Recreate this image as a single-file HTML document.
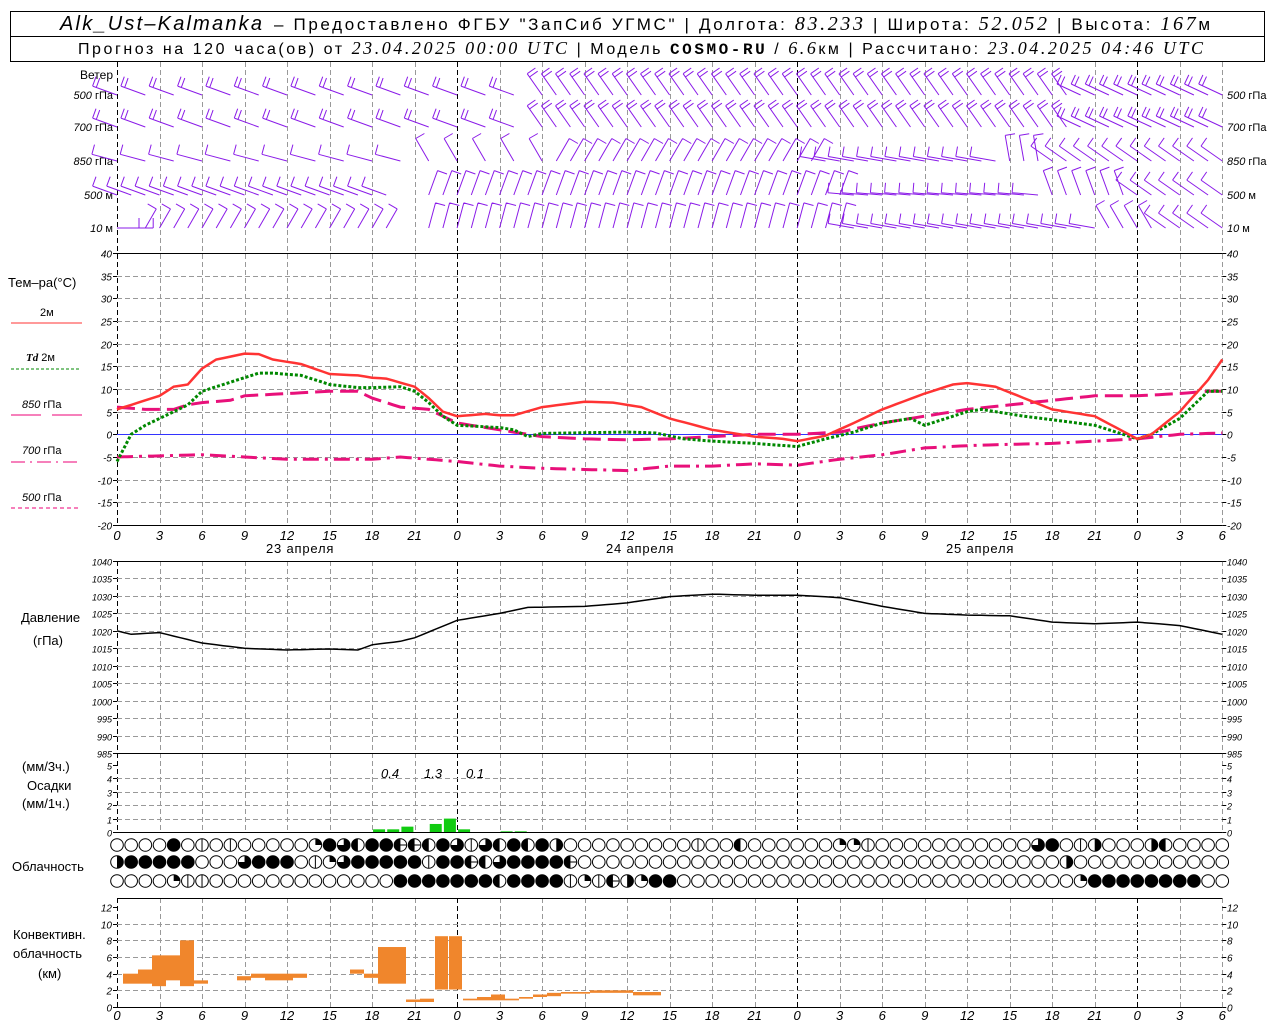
<!DOCTYPE html>
<html><head><meta charset="utf-8">
<style>
html,body{margin:0;padding:0;background:#fff;}
body{width:1280px;height:1024px;overflow:hidden;position:relative;font-family:"Liberation Sans",sans-serif;}
svg{position:absolute;left:0;top:0;}
text{font-family:"Liberation Sans",sans-serif;}
</style></head><body>
<svg id="s" width="1280" height="1024" xmlns="http://www.w3.org/2000/svg">
<rect x="10.5" y="11.5" width="1254" height="50" fill="none" stroke="#000"/>
<line x1="10" y1="36.5" x2="1265" y2="36.5" stroke="#000"/>
<text x="60" y="30" font-size="20" font-family="Liberation Serif" font-style="italic" textLength="202" lengthAdjust="spacing">Alk_Ust–Kalmanka</text>
<text x="274" y="30" font-size="17" textLength="936" lengthAdjust="spacing">–  Предоставлено ФГБУ "ЗапСиб УГМС" | Долгота: <tspan font-style="italic" font-family="Liberation Serif" font-size="20">83.233</tspan> | Широта: <tspan font-style="italic" font-family="Liberation Serif" font-size="20">52.052</tspan> | Высота: <tspan font-style="italic" font-family="Liberation Serif" font-size="20">167</tspan>м</text>
<text x="78" y="54" font-size="16" textLength="1125" lengthAdjust="spacing">Прогноз на 120 часа(ов) от <tspan font-style="italic" font-family="Liberation Serif" font-size="18">23.04.2025 00:00 UTC</tspan>  | Модель <tspan font-weight="bold" font-family="Liberation Mono">COSMO-RU</tspan> / <tspan font-style="italic" font-family="Liberation Serif" font-size="18">6.6</tspan>км | Рассчитано: <tspan font-style="italic" font-family="Liberation Serif" font-size="18">23.04.2025 04:46 UTC</tspan></text>

<g font-size="11">
<text x="113" y="79" text-anchor="end" font-size="12">Ветер</text>
<text x="113" y="99" text-anchor="end"><tspan font-style="italic">500</tspan> гПа</text>
<text x="113" y="131" text-anchor="end"><tspan font-style="italic">700</tspan> гПа</text>
<text x="113" y="165" text-anchor="end"><tspan font-style="italic">850</tspan> гПа</text>
<text x="113" y="199" text-anchor="end"><tspan font-style="italic">500</tspan>  м</text>
<text x="113" y="232" text-anchor="end"><tspan font-style="italic">10</tspan>   м</text>
<text x="1227" y="99"><tspan font-style="italic">500</tspan> гПа</text>
<text x="1227" y="131"><tspan font-style="italic">700</tspan> гПа</text>
<text x="1227" y="165"><tspan font-style="italic">850</tspan> гПа</text>
<text x="1227" y="199"><tspan font-style="italic">500</tspan>  м</text>
<text x="1227" y="232"><tspan font-style="italic">10</tspan>   м</text>
</g>
<g font-size="13">
<text x="8" y="287">Тем–ра(°C)</text>
<text x="40" y="316" font-size="11">2м</text>
<line x1="11" y1="323" x2="82" y2="323" stroke="#f33"/>
<text x="26" y="361" font-size="11"><tspan font-weight="bold" font-style="italic" font-family="Liberation Serif">Td</tspan>  2м</text>
<line x1="11" y1="369" x2="80" y2="369" stroke="#080" stroke-dasharray="3,2"/>
<text x="22" y="408" font-size="11"><tspan font-style="italic">850</tspan>  гПа</text>
<line x1="11" y1="415" x2="41" y2="415" stroke="#e07"/><line x1="52" y1="415" x2="82" y2="415" stroke="#e07"/>
<text x="22" y="454" font-size="11"><tspan font-style="italic">700</tspan>  гПа</text>
<line x1="11" y1="462" x2="77" y2="462" stroke="#e07" stroke-dasharray="14,5,2,5"/>
<text x="22" y="501" font-size="11"><tspan font-style="italic">500</tspan>  гПа</text>
<line x1="11" y1="508" x2="78" y2="508" stroke="#e07" stroke-dasharray="4,3"/>
<text x="21" y="622">Давление</text>
<text x="33" y="645">(гПа)</text>
<text x="22" y="771">(мм/3ч.)</text>
<text x="27" y="790">Осадки</text>
<text x="22" y="808">(мм/1ч.)</text>
<text x="12" y="871">Облачность</text>
<text x="13" y="939">Конвективн.</text>
<text x="13" y="958">облачность</text>
<text x="38" y="978">(км)</text>
<text x="381" y="778" font-style="italic" font-size="13">0.4</text>
<text x="424" y="778" font-style="italic" font-size="13">1.3</text>
<text x="466" y="778" font-style="italic" font-size="13">0.1</text>
<text x="266" y="553" font-size="13" letter-spacing="0.8">23 апреля</text>
<text x="606" y="553" font-size="13" letter-spacing="0.8">24 апреля</text>
<text x="946" y="553" font-size="13" letter-spacing="0.8">25 апреля</text>
</g>
<g id="g"></g>
</svg>
<script>
(function(){
var NS="http://www.w3.org/2000/svg",G=document.getElementById("g");
function el(n,a,t){var e=document.createElementNS(NS,n);for(var k in a)e.setAttribute(k,a[k]);if(t!==undefined)e.textContent=t;G.appendChild(e);return e;}
var X0=117,PX=14.17;function X(h){return X0+h*PX;}
function interp(p,h){for(var i=0;i<p.length-1;i++){if(h>=p[i][0]&&h<=p[i+1][0]){var t=(h-p[i][0])/(p[i+1][0]-p[i][0]);return p[i][1]+t*(p[i+1][1]-p[i][1]);}}return p[p.length-1][1];}
var segs=[[62,525],[561,832],[898,1007]];
for(var h=0;h<=78;h+=3){var x=Math.round(X(h))+0.5;var day=(h%24==0);
 segs.forEach(function(s){el("line",{x1:x,y1:s[0],x2:x,y2:s[1],stroke:day?"#000":"#999","stroke-dasharray":"5,3"});});}
function hgrid(y0,y1,n,vals,small){for(var i=0;i<=n;i++){var y=Math.round(y0+(y1-y0)*i/n)+0.5;
 if(i>0&&i<n)el("line",{x1:X0,y1:y,x2:X(78),y2:y,stroke:"#999","stroke-dasharray":"5,3"});
 var v=vals[i];el("text",{x:112,y:y+4,"font-size":small||10,"font-style":"italic","text-anchor":"end"},v);
 el("text",{x:1227,y:y+4,"font-size":small||10,"font-style":"italic"},v);
 el("line",{x1:X0-4,y1:y,x2:X0,y2:y,stroke:"#000"});el("line",{x1:X(78),y1:y,x2:X(78)+4,y2:y,stroke:"#000"});}}
var tv=[];for(var t=40;t>=-20;t-=5)tv.push(t);hgrid(253,525,12,tv);
var pv=[];for(var p=1040;p>=985;p-=5)pv.push(p);hgrid(561,753,11,pv,9);
hgrid(765,832,5,[5,4,3,2,1,0],9);
hgrid(907,1007,6,[12,10,8,6,4,2,0],10);
[253,525,561,753,832,898,1007].forEach(function(y){el("line",{x1:X0,y1:y+0.5,x2:X(78),y2:y+0.5,stroke:"#000"});});
for(var h=0;h<=78;h+=3){var s=String(h%24);el("text",{x:X(h),y:540,"font-size":13,"font-style":"italic","text-anchor":"middle"},s);el("text",{x:X(h),y:1020,"font-size":13,"font-style":"italic","text-anchor":"middle"},s);}
function TY(t){return 253+(40-t)*272/60;}
function curve(pts,style){var d="";for(var h=0;h<=78;h+=0.5){d+=(h?"L":"M")+X(h).toFixed(1)+","+TY(interp(pts,h)).toFixed(1);}style.d=d;style.fill="none";el("path",style);}
el("line",{x1:X0,y1:434.5,x2:X(78),y2:434.5,stroke:"#33f"});
var T850=[[0,6],[2,5.5],[4,5.5],[5,6.5],[6,7],[8,7.5],[9,8.5],[12,9],[15,9.5],[17,9.5],[18,8],[20,6],[22,5.5],[24,2.5],[27,1],[30,-0.5],[33,-1],[36,-1.2],[39,-1],[42,-0.5],[45,0],[48,0],[51,0.5],[54,2.5],[57,4],[60,5.5],[63,6.5],[66,7.5],[69,8.5],[72,8.5],[75,9],[77,9.5],[78,9.5]];
curve(T850,{stroke:"#e8107a","stroke-width":3,"stroke-dasharray":"18,7"});
var T700=[[0,-5],[6,-4.5],[9,-5],[12,-5.5],[18,-5.5],[20,-5],[24,-6],[27,-7],[30,-7.5],[36,-8],[39,-7],[42,-7],[45,-6.5],[48,-6.8],[51,-5.5],[54,-4.5],[57,-3],[60,-2.5],[63,-2.2],[66,-2],[69,-1.5],[72,-1],[75,0],[78,0.3]];
curve(T700,{stroke:"#e8107a","stroke-width":3,"stroke-dasharray":"16,6,3,6"});
var TD=[[0,-6],[1,0],[2,2],[3,3.5],[5,6.5],[6,9.5],[8,11.5],[10,13.5],[11,13.5],[13,13],[14,12],[15,11],[17,10.3],[18,10.3],[20,10.5],[21,9.5],[22,7],[23,4],[24,2],[27,1.5],[28,1],[29,-0.5],[30,0.2],[36,0.5],[38,0.3],[40,-1],[42,-1.5],[45,-2],[48,-2.7],[50,-1],[52,0.5],[54,2.5],[56,3.5],[57,2],[60,5],[61,5.5],[64,4],[66,3.2],[69,2],[72,-1],[73,0],[75,3.5],[77,9.5],[78,9.5]];
curve(TD,{stroke:"#080","stroke-width":3,"stroke-dasharray":"3,2"});
var T2=[[0,5.5],[3,8.5],[4,10.5],[5,11],[6,14.5],[7,16.5],[9,17.8],[10,17.7],[11,16.5],[13,15.5],[15,13.3],[17,13],[18,12.5],[19,12.3],[21,10.5],[22,8],[23,5],[24,4],[26,4.5],[27,4.2],[28,4.2],[30,6],[33,7.2],[35,7],[37,6],[39,3.5],[42,1],[45,-0.5],[47,-1],[48,-1.5],[50,-0.3],[52,2.5],[54,5.5],[57,9],[59,11],[60,11.3],[62,10.5],[64,8],[66,5.5],[69,4],[72,-1],[73,0],[75,5],[77,12],[78,16.5]];
curve(T2,{stroke:"#f33","stroke-width":2.5});
var PR=[[0,1020],[1,1019],[3,1019.5],[6,1016.5],[9,1015],[12,1014.5],[15,1014.8],[17,1014.5],[18,1016],[20,1017],[21,1018],[24,1023],[27,1025],[29,1026.7],[33,1027],[36,1028],[39,1029.8],[42,1030.5],[45,1030.2],[48,1030.2],[51,1029.5],[54,1027],[57,1025],[60,1024.5],[63,1024.3],[66,1022.5],[69,1022],[72,1022.5],[75,1021.5],[78,1019]];
var d="";for(var h=0;h<=78;h+=0.5){d+=(h?"L":"M")+X(h).toFixed(1)+","+(561+(1040-interp(PR,h))*192/55).toFixed(1);}
el("path",{d:d,stroke:"#000","stroke-width":1.5,fill:"none"});
[[18,0.2],[19,0.2],[20,0.4],[22,0.6],[23,1.0],[24,0.2],[27,0.05],[28,0.05]].forEach(function(b){var y=832-b[1]*13.4;el("rect",{x:X(b[0])+1,y:y,width:12,height:832-y,fill:"#1c1"});});
var CB=[[123,138,2.8,4],[138,152,2.8,4.5],[152,166,2.5,6.2],[166,180,3.2,6.2],[180,194,2.5,8],[194,208,2.8,3.2],[237,251,3.2,3.7],[251,265,3.5,4],[265,293,3.2,4],[293,307,3.5,4],[350,364,4,4.5],[364,378,3.5,4],[378,406,2.8,7.2],[406,420,0.6,0.9],[420,434,0.6,1],[435,448,2.1,8.5],[449,462,2.1,8.5],[463,477,0.8,1],[477,491,0.8,1.2],[491,505,0.8,1.5],[505,519,0.8,1],[519,533,1,1.2],[533,547,1.2,1.5],[547,561,1.3,1.7],[561,590,1.6,1.8],[590,633,1.7,2],[633,661,1.4,1.8]];
CB.forEach(function(b){var y1=1007-b[3]*8.33,y0=1007-b[2]*8.33;el("rect",{x:b[0],y:y1,width:b[1]-b[0],height:y0-y1,fill:"#f0862c"});});
var rows=[
"OOOOFOVOVOOOOOQFTLFFEELFTVTLFLFROOOOOOOOOVOOLOOOOOOQQVOOOOOOOOOOOTFOVROOORLOOOOO",
"RFFFFFOOOTFFFOVQTFFFFFVFFELTFFFFEOOOOOOOOOOOOOOOOOOOOOOOOOOOOOOOOOOROOOOOOOOOOOOO",
"OOOOQVVOOOOOOOOOOOOOFFFFFFFLFFFFVQVERQFFOOOOOOOOOOOOOOOOOOOOOOOOOOOOQFFFFFFFFOOOO"];
var ry=[845,862,881];
rows.forEach(function(r,ri){for(var i=0;i<=78;i++){var c=r.charAt(i)||"O",cx=X(i),cy=ry[ri],R=6.3;
 if(c=="F")el("circle",{cx:cx,cy:cy,r:R,fill:"#000",stroke:"#000"});
 else{el("circle",{cx:cx,cy:cy,r:R,fill:"#fff",stroke:"#000"});
  if(c=="V")el("line",{x1:cx,y1:cy-R,x2:cx,y2:cy+R,stroke:"#000"});
  if(c=="E"){el("path",{d:"M"+cx+","+(cy-R)+"A"+R+","+R+" 0 0,0 "+cx+","+(cy+R)+"Z",fill:"#000"});el("line",{x1:cx-R,y1:cy,x2:cx+R,y2:cy,stroke:"#000"});}
  if(c=="L")el("path",{d:"M"+cx+","+(cy-R)+"A"+R+","+R+" 0 0,0 "+cx+","+(cy+R)+"Z",fill:"#000"});
  if(c=="R")el("path",{d:"M"+cx+","+(cy-R)+"A"+R+","+R+" 0 0,1 "+cx+","+(cy+R)+"Z",fill:"#000"});
  if(c=="Q")el("path",{d:"M"+cx+","+cy+"L"+cx+","+(cy-R)+"A"+R+","+R+" 0 0,1 "+(cx+R)+","+cy+"Z",fill:"#000"});
  if(c=="T")el("path",{d:"M"+cx+","+cy+"L"+cx+","+(cy-R)+"A"+R+","+R+" 0 1,1 "+(cx-R)+","+cy+"Z",fill:"#000"});
 }}});
var lv=[95,127,161,195,228];
function ang(l,i){
 if(l<=1){return i<30?200:(i<68?235:205);}
 if(l==2){return i<22?195:(i<31?240:(i<50?300:(i<63?190:(i<66?260:215))));}
 if(l==3){return i<20?200:(i<52?290:(i<66?185:(i<72?250:215)));}
 return i<2?0:(i<20?300:(i<52?285:(i<70?190:(i<74?240:215))));}
var dd="";
for(var l=0;l<5;l++)for(var i=0;i<=78;i++){
 if(l>=3&&i>=20&&i<=21)continue;
 if(l<=2&&i<30&&i%2==1)continue;
 var a=ang(l,i)*Math.PI/180,x=X(i),y=lv[l],L=(l==4&&i<20)?22:26;
 var tx=x+L*Math.cos(a),ty=y+L*Math.sin(a);
 dd+="M"+x.toFixed(1)+","+y+"L"+tx.toFixed(1)+","+ty.toFixed(1);
 var n=(l<=1)?2:1;
 var px=Math.cos(a-Math.PI/2),py=Math.sin(a-Math.PI/2);if(py>0){px=-px;py=-py;}
 if(l>=2&&i>=22&&i<52){px=Math.cos(a+Math.PI/2);py=Math.sin(a+Math.PI/2);if(px<0){px=-px;py=-py;}}
 for(var k=0;k<n;k++){var bx=tx-k*4*Math.cos(a),by=ty-k*4*Math.sin(a);
  dd+="M"+bx.toFixed(1)+","+by.toFixed(1)+"L"+(bx+10*px).toFixed(1)+","+(by+10*py).toFixed(1);}
}
el("path",{d:dd,stroke:"#8a1be8","stroke-width":1,fill:"none"});
})();
</script>
</body></html>
